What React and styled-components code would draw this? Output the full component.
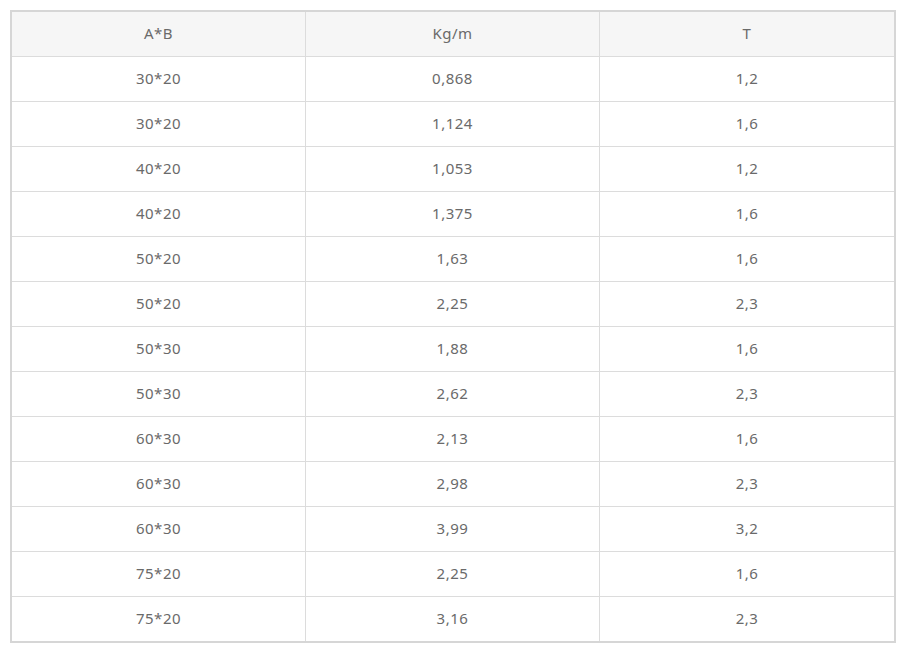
import styled, { createGlobalStyle } from "styled-components";

const rows = [
  ["30*20", "0,868", "1,2"],
  ["30*20", "1,124", "1,6"],
  ["40*20", "1,053", "1,2"],
  ["40*20", "1,375", "1,6"],
  ["50*20", "1,63", "1,6"],
  ["50*20", "2,25", "2,3"],
  ["50*30", "1,88", "1,6"],
  ["50*30", "2,62", "2,3"],
  ["60*30", "2,13", "1,6"],
  ["60*30", "2,98", "2,3"],
  ["60*30", "3,99", "3,2"],
  ["75*20", "2,25", "1,6"],
  ["75*20", "3,16", "2,3"],
];

const GlobalStyle = createGlobalStyle`
  body {
    margin: 0;
    background: #fff;
    font-family: "Noto Sans", "Noto Sans CJK KR", sans-serif;
  }
`;

export default function App() {
  return (
    <Page>
      <GlobalStyle />
      <Table>
        <thead>
          <tr>
            <Th>A*B</Th>
            <Th>Kg/m</Th>
            <Th $last>T</Th>
          </tr>
        </thead>
        <tbody>
          {rows.map((r, i) => (
            <tr key={i}>
              {r.map((v, j) => (
                <Td key={j} $last={j === 2} $bottom={i === rows.length - 1}>
                  {v}
                </Td>
              ))}
            </tr>
          ))}
        </tbody>
      </Table>
    </Page>
  );
}

const Page = styled.div`
  padding: 10px;
`;

const Table = styled.table`
  width: 886px;
  border-collapse: separate;
  border-spacing: 0;
  border: 2px solid #d6d6d6;
  table-layout: fixed;
`;

const cell = `
  height: 44px;
  padding: 0 0 2px;
  box-sizing: border-box;
  font-size: 15px;
  line-height: 20px;
  letter-spacing: 0.5px;
  color: #6a6a6a;
  text-align: center;
  vertical-align: middle;
`;

const Th = styled.th`
  ${cell}
  height: 45px;
  background: #f6f6f6;
  font-weight: normal;
  border-bottom: 1px solid #dcdcdc;
  border-right: ${(p) => (p.$last ? "none" : "1px solid #dcdcdc")};
`;

const Td = styled.td`
  ${cell}
  height: ${(p) => (p.$bottom ? "44px" : "45px")};
  border-bottom: ${(p) => (p.$bottom ? "none" : "1px solid #dcdcdc")};
  border-right: ${(p) => (p.$last ? "none" : "1px solid #dcdcdc")};
`;
